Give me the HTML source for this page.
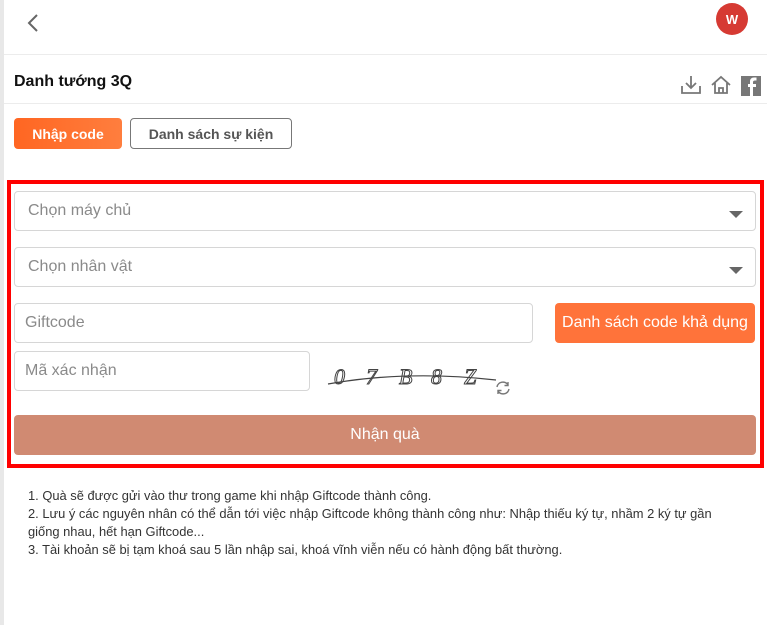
<!DOCTYPE html>
<html><head><meta charset="utf-8"><style>
*{box-sizing:border-box;margin:0;padding:0}
body{width:767px;height:625px;background:#fff;font-family:"Liberation Sans",sans-serif;position:relative;overflow:hidden}
.strip{position:absolute;left:0;top:0;width:4px;height:625px;background:#e8e8e8}
.abs{position:absolute}
.line{position:absolute;left:4px;right:0;height:1px;background:#ececec}
.inp{position:absolute;border:1px solid #d6d6d6;border-radius:4px;background:#fff;color:#8a8a8a;font-size:16px;padding-left:13px;display:flex;align-items:center}
.caret{position:absolute;right:12px;top:19px;width:0;height:0;border-left:7px solid transparent;border-right:7px solid transparent;border-top:7px solid #666}
.notes{position:absolute;left:28px;top:487px;font-size:12.9px;color:#333;line-height:18px;width:700px}
</style></head><body>
<div class="strip"></div>
<svg class="abs" style="left:26px;top:13px" width="14" height="20"><path d="M11 2 L3 10 L11 18" fill="none" stroke="#666" stroke-width="2"/></svg>
<div class="abs" style="left:716px;top:3px;width:32px;height:32px;border-radius:50%;background:#d63a33;color:#fff;font-size:13px;font-weight:bold;display:flex;align-items:center;justify-content:center">W</div>
<div class="line" style="top:54px"></div>
<div class="abs" style="left:14px;top:73px;font-size:16px;font-weight:bold;color:#111">Danh tướng 3Q</div>
<svg class="abs" style="left:680px;top:74px" width="84" height="22">
<path d="M11 2 V14 M6 9 L11 14 L16 9 M2 12 V19 H20 V12" fill="none" stroke="#777" stroke-width="1.8"/>
<path d="M32 11 L41 3 L50 11 M35 9 V19 H47 V9 M39 19 V14 H43 V19" fill="none" stroke="#777" stroke-width="1.8"/>
<rect x="61" y="2" width="20" height="20" fill="#777"/>
<path d="M73 22 V13 H76 V10 H73 V8 C73 7 74 6.5 75 6.5 H76.5 V3.5 H74 C71.5 3.5 70 5 70 7.5 V10 H68 V13 H70 V22Z" fill="#fff"/>
</svg>
<div class="line" style="top:103px"></div>
<div class="abs" style="left:14px;top:118px;width:108px;height:31px;border-radius:4px;background:linear-gradient(90deg,#ff6622,#ff7e3e);color:#fff;font-weight:bold;font-size:14px;display:flex;align-items:center;justify-content:center">Nhập code</div>
<div class="abs" style="left:130px;top:118px;width:162px;height:31px;border-radius:4px;border:1px solid #777;color:#555;font-weight:bold;font-size:14px;display:flex;align-items:center;justify-content:center">Danh sách sự kiện</div>
<div class="abs" style="left:7px;top:180px;width:757px;height:288px;border:4px solid #f00"></div>
<div class="inp" style="left:14px;top:191px;width:742px;height:40px">Chọn máy chủ<span class="caret"></span></div>
<div class="inp" style="left:14px;top:247px;width:742px;height:40px">Chọn nhân vật<span class="caret"></span></div>
<div class="inp" style="left:14px;top:303px;width:519px;height:40px;padding-left:10px">Giftcode</div>
<div class="abs" style="left:555px;top:303px;width:200px;height:40px;border-radius:4px;background:#ff733a;color:#fff;font-size:16px;display:flex;align-items:center;justify-content:center">Danh sách code khả dụng</div>
<div class="inp" style="left:14px;top:351px;width:296px;height:40px;padding-left:10px">Mã xác nhận</div>
<svg class="abs" style="left:326px;top:358px" width="190" height="40">
<g font-family="Liberation Serif,serif" font-size="22" font-style="italic" fill="#fff" stroke="#444" stroke-width="1">
<text x="8" y="26">0</text><text x="40" y="26">7</text><text x="73" y="26">B</text><text x="105" y="26">8</text><text x="138" y="26">Z</text></g>
<path d="M2 26 Q80 12 170 22" fill="none" stroke="#444" stroke-width="1.2"/>
<path d="M171 29 A6 6 0 0 1 182 27 M183 31 A6 6 0 0 1 172 33 M182 24 V27.5 H178.5 M172 36 V32.5 H175.5" fill="none" stroke="#777" stroke-width="1.4"/>
</svg>
<div class="abs" style="left:14px;top:415px;width:742px;height:40px;border-radius:4px;background:#d08a72;color:#fff;font-size:16px;display:flex;align-items:center;justify-content:center">Nhận quà</div>
<div class="notes">1. Quà sẽ được gửi vào thư trong game khi nhập Giftcode thành công.<br>2. Lưu ý các nguyên nhân có thể dẫn tới việc nhập Giftcode không thành công như: Nhập thiếu ký tự, nhầm 2 ký tự gần giống nhau, hết hạn Giftcode...<br>3. Tài khoản sẽ bị tạm khoá sau 5 lần nhập sai, khoá vĩnh viễn nếu có hành động bất thường.</div>
</body></html>
